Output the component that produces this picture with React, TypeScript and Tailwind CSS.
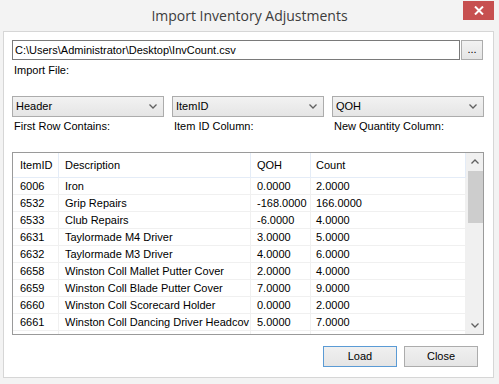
import React from "react";

const rows = [
  { id: "6006", desc: "Iron", qoh: "0.0000", count: "2.0000" },
  { id: "6532", desc: "Grip Repairs", qoh: "-168.0000", count: "166.0000" },
  { id: "6533", desc: "Club Repairs", qoh: "-6.0000", count: "4.0000" },
  { id: "6631", desc: "Taylormade M4 Driver", qoh: "3.0000", count: "5.0000" },
  { id: "6632", desc: "Taylormade M3 Driver", qoh: "4.0000", count: "6.0000" },
  { id: "6658", desc: "Winston Coll Mallet Putter Cover", qoh: "2.0000", count: "4.0000" },
  { id: "6659", desc: "Winston Coll Blade Putter Cover", qoh: "7.0000", count: "9.0000" },
  { id: "6660", desc: "Winston Coll Scorecard Holder", qoh: "0.0000", count: "2.0000" },
  { id: "6661", desc: "Winston Coll Dancing Driver Headcov", qoh: "5.0000", count: "7.0000" },
  { id: "", desc: "", qoh: "", count: "" },
];

function Chevron({ up = false }: { up?: boolean }) {
  return (
    <svg width="8" height="5" viewBox="0 0 8 5" className="block">
      <polyline
        points={up ? "0.5,4.5 4,1 7.5,4.5" : "0.5,0.5 4,4 7.5,0.5"}
        fill="none"
        stroke="#606060"
        strokeWidth="1.3"
      />
    </svg>
  );
}

function Combo({ value }: { value: string }) {
  return (
    <div className="flex h-[21px] w-[152px] items-center justify-between border border-[#acacac] bg-gradient-to-b from-[#f2f2f2] to-[#e5e5e5] pl-[3px] pr-[6px]">
      <span>{value}</span>
      <Chevron />
    </div>
  );
}

export default function App() {
  return (
    <div
      className="flex h-[384px] w-[499px] flex-col overflow-hidden bg-[#f3f3f3] text-[11px] leading-[13px] text-black"
      style={{ fontFamily: '"Liberation Sans", Arial, sans-serif' }}
    >
      {/* Title bar */}
      <div className="relative flex h-[31px] shrink-0 items-center justify-center">
        <span
          className="text-[14px] leading-[20px] text-[#3c3c3c]"
          style={{ fontFamily: '"Open Sans", "Noto Sans", sans-serif' }}
        >
          Import Inventory Adjustments
        </span>
        <div className="absolute right-[5px] top-[1px] flex h-[19px] w-[31px] items-center justify-center bg-[#c75050]">
          <svg width="10" height="9" viewBox="0 0 10 9">
            <path d="M1 0.5 L9 8.5 M9 0.5 L1 8.5" stroke="#fff" strokeWidth="2" />
          </svg>
        </div>
      </div>

      {/* Client panel */}
      <div className="ml-[3px] flex h-[347px] w-[491px] flex-col border border-[#d6d6d6] bg-white pl-[8px] pt-[8px]">
        <div className="flex h-[20px] gap-[1px]">
          <div className="flex h-[20px] w-[448px] items-center border border-[#7a7a7a] pl-[2px]">
            C:\Users\Administrator\Desktop\InvCount.csv
          </div>
          <div className="flex h-[20px] w-[22px] items-center justify-center border border-[#acacac] bg-gradient-to-b from-[#f2f2f2] to-[#e5e5e5] pb-[2px]">
            ...
          </div>
        </div>
        <div className="mt-[4px] pl-[2px]">Import File:</div>

        <div className="mt-[19px] flex gap-[8px]">
          <Combo value="Header" />
          <Combo value="ItemID" />
          <Combo value="QOH" />
        </div>
        <div className="mt-[3px] flex gap-[8px]">
          <div className="w-[152px] pl-[2px]">First Row Contains:</div>
          <div className="w-[152px] pl-[2px]">Item ID Column:</div>
          <div className="w-[152px] pl-[2px]">New Quantity Column:</div>
        </div>

        {/* Data grid */}
        <div className="mt-[19px] flex h-[183px] w-[472px] border border-[#9a9a9a]">
          <div className="flex min-w-0 flex-1 flex-col overflow-hidden">
            <div className="flex h-[25px] shrink-0 items-center border-b border-[#e4ecf7]">
              <div className="flex h-full w-[46px] items-center border-r border-[#e4ecf7] pl-[7px]">ItemID</div>
              <div className="flex h-full w-[192px] items-center border-r border-[#e4ecf7] pl-[6px]">Description</div>
              <div className="flex h-full w-[60px] items-center border-r border-[#e4ecf7] pl-[6px]">QOH</div>
              <div className="flex h-full flex-1 items-center border-r border-[#e4ecf7] pl-[5px]">Count</div>
            </div>
            {rows.map((r, i) => (
              <div key={i} className="flex h-[17px] shrink-0 items-center border-b border-[#f0f0f0]">
                <div className="flex h-full w-[46px] items-center border-r border-[#f0f0f0] pl-[7px]">{r.id}</div>
                <div className="flex h-full w-[192px] items-center overflow-hidden whitespace-nowrap border-r border-[#f0f0f0] pl-[6px]">
                  {r.desc}
                </div>
                <div className="flex h-full w-[60px] items-center border-r border-[#f0f0f0] pl-[6px]">{r.qoh}</div>
                <div className="flex h-full flex-1 items-center border-r border-[#f0f0f0] pl-[5px]">{r.count}</div>
              </div>
            ))}
          </div>
          <div className="flex w-[17px] shrink-0 flex-col items-center bg-[#f0f0f0]">
            <div className="flex h-[17px] w-full items-center justify-center">
              <Chevron up />
            </div>
            <div className="ml-[1px] mt-[1px] h-[52px] w-[15px] bg-[#cdcdcd]" />
            <div className="flex-1" />
            <div className="flex h-[17px] w-full items-center justify-center">
              <Chevron />
            </div>
          </div>
        </div>

        <div className="mt-[11px] flex w-[472px] justify-end gap-[7px] pr-[6px]">
          <div className="flex h-[21px] w-[74px] items-center justify-center border border-[#5b9bd5] bg-gradient-to-b from-[#f0f0f0] to-[#e5e5e5]">
            Load
          </div>
          <div className="flex h-[21px] w-[74px] items-center justify-center border border-[#acacac] bg-gradient-to-b from-[#f0f0f0] to-[#e5e5e5]">
            Close
          </div>
        </div>
      </div>
    </div>
  );
}
